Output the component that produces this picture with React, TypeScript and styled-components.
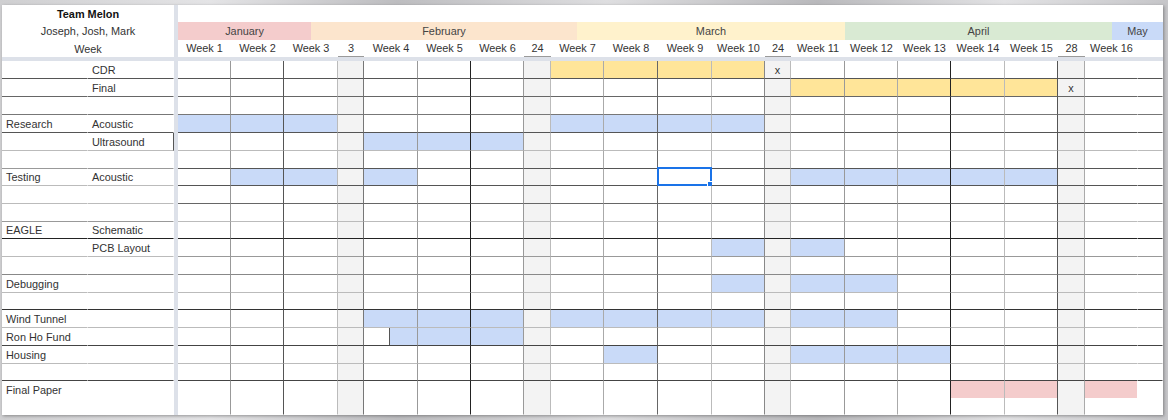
import React from "react";
import styled, { createGlobalStyle } from "styled-components";

const COLS = [53, 53, 54, 26, 54, 53, 53, 27, 53, 54, 54, 53, 26, 54, 53, 53, 54, 53, 27, 53, 25];
const GRAY = new Set([3, 7, 12, 18]);
const VLINE = [
  "#999", "#555", "#bbb", "#777", "#999", "#222", "#999", "#bbb", "#aaa", "#666", "#bbb",
  "#888", "#bbb", "#999", "#aaa", "#222", "#bbb", "#555", "#aaa", "transparent", "transparent",
];
const WEEKS = [
  "Week 1", "Week 2", "Week 3", "3", "Week 4", "Week 5", "Week 6", "24", "Week 7", "Week 8", "Week 9",
  "Week 10", "24", "Week 11", "Week 12", "Week 13", "Week 14", "Week 15", "28", "Week 16", "",
];
const GRID = `86px 86px 4px ${COLS.map((c) => c + "px").join(" ")}`;

const MONTHS = [
  { name: "January", w: 133, c: "#f4cccc" },
  { name: "February", w: 266, c: "#fce5cd" },
  { name: "March", w: 268, c: "#fff2cc" },
  { name: "April", w: 267, c: "#d9ead3" },
  { name: "May", w: 51, c: "#c9daf8" },
];

const BLUE = "#c9daf8";
const YEL = "#ffe599";
const PINK = "#f4cccc";
const DIV = "#dde1e9";

type Fill = { c: string; w?: number; h?: number; edge?: string };
type RowDef = {
  a?: string;
  b?: string;
  h: number;
  line: string;
  lline?: string;
  fills?: Record<number, Fill>;
  marks?: Record<number, string>;
  sel?: number;
  bRight?: string;
  top?: boolean;
};

const span = (from: number, to: number, f: Fill = { c: BLUE }) => {
  const o: Record<number, Fill> = {};
  for (let i = from; i <= to; i++) if (!GRAY.has(i)) o[i] = f;
  return o;
};

const ROWS: RowDef[] = [
  { b: "CDR", h: 18, line: "#555", fills: span(8, 11, { c: YEL }), marks: { 12: "x" } },
  { b: "Final", h: 18, line: "#666", fills: span(13, 17, { c: YEL }), marks: { 18: "x" } },
  { h: 18, line: "#777" },
  { a: "Research", b: "Acoustic", h: 18, line: "#555", fills: { ...span(0, 2), ...span(8, 11) } },
  { b: "Ultrasound", h: 18, line: "#bbb", bRight: "#555", fills: span(4, 6) },
  { h: 18, line: "#555", lline: "#999" },
  {
    a: "Testing",
    b: "Acoustic",
    h: 17,
    line: "#555",
    lline: "#bbb",
    fills: { ...span(1, 2), ...span(4, 4), ...span(13, 17) },
    sel: 10,
  },
  { h: 18, line: "#666", lline: "#bbb" },
  { h: 18, line: "#bbb", lline: "#999" },
  { a: "EAGLE", b: "Schematic", h: 17, line: "#222" },
  { b: "PCB Layout", h: 18, line: "#999", lline: "#bbb", fills: { ...span(11, 11), ...span(13, 13) } },
  { h: 18, line: "#888" },
  { a: "Debugging", h: 18, line: "#bbb", fills: { ...span(11, 11), ...span(13, 14) } },
  { h: 17, line: "#333" },
  { a: "Wind Tunnel", h: 18, line: "#bbb", fills: { ...span(4, 6), ...span(8, 14) } },
  { a: "Ron Ho Fund", h: 18, line: "#444", fills: { 4: { c: BLUE, w: 27, edge: "#555" }, ...span(5, 6) } },
  { a: "Housing", h: 18, line: "#bbb", fills: { ...span(9, 9), ...span(13, 15) } },
  { h: 17, line: "#444" },
  {
    a: "Final Paper",
    h: 34,
    line: "transparent",
    top: true,
    fills: { ...span(16, 17, { c: PINK, h: 17 }), 19: { c: PINK, h: 17 } },
  },
];

const Global = createGlobalStyle`
  html, body {
    margin: 0;
    padding: 0;
  }
  body {
    width: 1168px;
    height: 420px;
    overflow: hidden;
    background:
      linear-gradient(90deg, #cfcfd1 0%, #e4e4e6 18%, #bdbdc0 34%, #dedee0 52%, #b9b9bc 70%, #e2e2e4 86%, #c6c6c9 100%);
    font-family: "Liberation Sans", Arial, sans-serif;
  }
`;

const Page = styled.div`
  padding: 5px 0 0 2px;
`;

const Sheet = styled.div`
  width: 1161px;
  background: #fff;
  box-shadow: 1px 1px 3px rgba(0, 0, 0, 0.35);
  font-size: 10.9px;
  color: #222;
`;

const Row = styled.div<{ $h: number }>`
  display: grid;
  grid-template-columns: ${GRID};
  height: ${(p) => p.$h}px;
`;

const FrozenHead = styled.div<{ $bold?: boolean }>`
  grid-column: span 2;
  display: flex;
  align-items: center;
  justify-content: center;
  font-weight: ${(p) => (p.$bold ? 700 : 400)};
  color: ${(p) => (p.$bold ? "#111" : "#333")};
`;

const VDivider = styled.div`
  background: ${DIV};
`;

const HDivider = styled.div`
  height: 4px;
  background: ${DIV};
`;

const MainBlank = styled.div`
  grid-column: 4 / -1;
`;

const MonthBand = styled.div`
  grid-column: 4 / -1;
  display: flex;
`;

const Month = styled.div<{ $w: number; $c: string }>`
  width: ${(p) => p.$w}px;
  background: ${(p) => p.$c};
  display: flex;
  align-items: center;
  justify-content: center;
  color: #444;
`;

const WeekHead = styled.div<{ $gray: boolean }>`
  box-sizing: border-box;
  display: flex;
  align-items: center;
  justify-content: center;
  white-space: nowrap;
  color: #333;
  border-bottom: 1px solid ${(p) => (p.$gray ? "#9a9a9a" : "transparent")};
`;

const Label = styled.div<{ $bottom: string; $right?: string; $top?: boolean }>`
  box-sizing: border-box;
  display: flex;
  align-items: ${(p) => (p.$top ? "flex-start" : "center")};
  padding: ${(p) => (p.$top ? "3px 0 0 4px" : "0 0 0 4px")};
  white-space: nowrap;
  color: #333;
  border-bottom: 1px solid ${(p) => p.$bottom};
  border-right: 1px solid ${(p) => p.$right ?? "transparent"};
`;

const Cell = styled.div<{
  $bg: string;
  $line: string;
  $bottom: string;
  $fill?: string;
  $edge?: string;
  $fw?: number;
  $fh?: number;
}>`
  position: relative;
  box-sizing: border-box;
  display: flex;
  align-items: center;
  justify-content: center;
  color: #333;
  border-right: 1px solid ${(p) => p.$line};
  border-bottom: 1px solid ${(p) => p.$bottom};
  background-color: ${(p) => p.$bg};
  background-image: ${(p) =>
    p.$fill
      ? p.$edge
        ? `linear-gradient(to right, ${p.$edge} 0 1px, ${p.$fill} 1px)`
        : `linear-gradient(${p.$fill}, ${p.$fill})`
      : "none"};
  background-size: ${(p) => `${p.$fw ? p.$fw + (p.$edge ? 1 : 0) + "px" : "100%"} ${p.$fh ? p.$fh + "px" : "100%"}`};
  background-position: right top;
  background-repeat: no-repeat;
`;

const Selection = styled.div`
  position: absolute;
  left: -1px;
  top: -2px;
  right: -1px;
  bottom: -1px;
  border: 2px solid #1a73e8;
  pointer-events: none;
`;

const Handle = styled.div`
  position: absolute;
  right: -5px;
  bottom: -5px;
  width: 6px;
  height: 6px;
  background: #1a73e8;
  border: 1px solid #fff;
`;

function BodyRow({ r }: { r: RowDef }) {
  const lline = r.lline ?? r.line;
  return (
    <Row $h={r.h}>
      <Label $bottom={lline} $top={r.top}>{r.a}</Label>
      <Label $bottom={lline} $right={r.bRight} $top={r.top}>{r.b}</Label>
      <VDivider />
      {COLS.map((_, i) => {
        const f = r.fills?.[i];
        return (
          <Cell
            key={i}
            $bg={GRAY.has(i) ? "#f3f3f3" : "#fff"}
            $line={VLINE[i]}
            $bottom={r.line}
            $fill={f?.c}
            $fw={f?.w}
            $fh={f?.h}
            $edge={f?.edge}
          >
            {r.marks?.[i]}
            {r.sel === i && (
              <Selection>
                <Handle />
              </Selection>
            )}
          </Cell>
        );
      })}
    </Row>
  );
}

export default function App() {
  return (
    <>
      <Global />
      <Page>
        <Sheet>
          <Row $h={17}>
            <FrozenHead $bold>Team Melon</FrozenHead>
            <VDivider />
            <MainBlank />
          </Row>
          <Row $h={18}>
            <FrozenHead>Joseph, Josh, Mark</FrozenHead>
            <VDivider />
            <MonthBand>
              {MONTHS.map((m) => (
                <Month key={m.name} $w={m.w} $c={m.c}>
                  {m.name}
                </Month>
              ))}
            </MonthBand>
          </Row>
          <Row $h={17}>
            <FrozenHead>Week</FrozenHead>
            <VDivider />
            {WEEKS.map((w, i) => (
              <WeekHead key={i} $gray={GRAY.has(i)}>
                {w}
              </WeekHead>
            ))}
          </Row>
          <HDivider />
          {ROWS.map((r, i) => (
            <BodyRow key={i} r={r} />
          ))}
        </Sheet>
      </Page>
    </>
  );
}
